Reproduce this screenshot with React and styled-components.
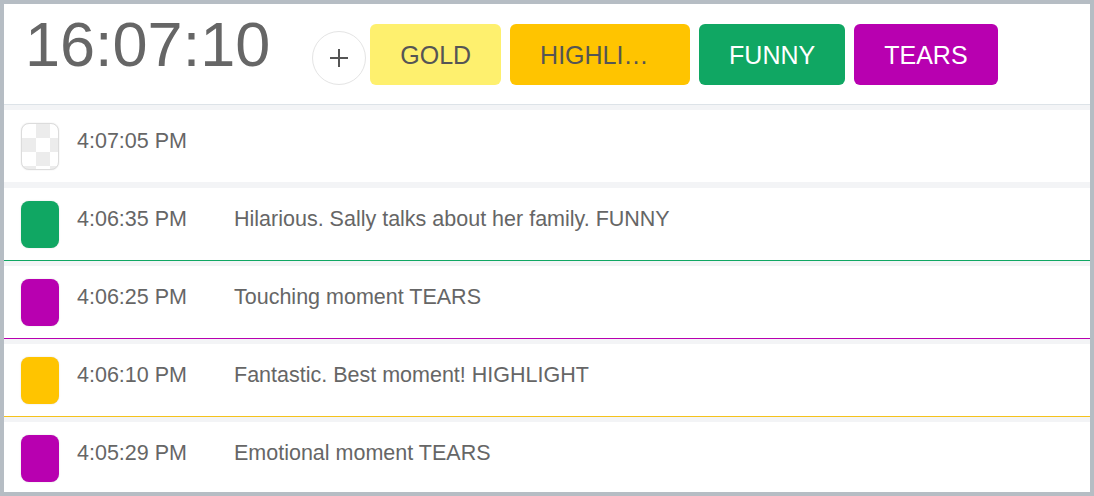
import React from "react";
import styled, { createGlobalStyle } from "styled-components";

const GlobalStyle = createGlobalStyle`
  html, body { margin: 0; padding: 0; background: #ffffff; }
  * { box-sizing: border-box; }
`;

const TAGS = {
  GOLD: { bg: "#fef06e", fg: "#555555", line: "#fef06e" },
  HIGHLIGHT: { bg: "#ffc400", fg: "#555555", line: "#f5c21c" },
  FUNNY: { bg: "#10a763", fg: "#ffffff", line: "#10a763" },
  TEARS: { bg: "#b800b0", fg: "#ffffff", line: "#b800b0" },
};

const entries = [
  { time: "4:07:05 PM", text: "", tag: null },
  { time: "4:06:35 PM", text: "Hilarious. Sally talks about her family. FUNNY", tag: "FUNNY" },
  { time: "4:06:25 PM", text: "Touching moment TEARS", tag: "TEARS" },
  { time: "4:06:10 PM", text: "Fantastic. Best moment! HIGHLIGHT", tag: "HIGHLIGHT" },
  { time: "4:05:29 PM", text: "Emotional moment TEARS", tag: "TEARS" },
];

const Frame = styled.div`
  width: 1094px;
  height: 496px;
  border: 4px solid #b6bdc4;
  background: #f3f4f6;
  overflow: hidden;
  font-family: "Liberation Sans", Arial, Helvetica, sans-serif;
  color: #666666;
`;

const Header = styled.header`
  display: flex;
  align-items: flex-start;
  height: 101px;
  padding-left: 21px;
  background: #ffffff;
  border-bottom: 1px solid #dde3e8;
`;

const Clock = styled.div`
  margin-top: 9px;
  font-size: 63px;
  line-height: 63px;
  color: #666666;
`;

const AddButton = styled.button`
  display: flex;
  align-items: center;
  justify-content: center;
  width: 54px;
  height: 54px;
  margin: 27px 0 0 42px;
  padding: 0;
  border: 1px solid #e4e4e4;
  border-radius: 50%;
  background: #ffffff;
  color: #555555;
`;

const TagBar = styled.div`
  display: flex;
  gap: 9px;
  margin: 20px 0 0 4px;
`;

const TagButton = styled.button`
  height: 61px;
  max-width: 180px;
  padding: 2px 30px 0;
  border: none;
  border-radius: 6px;
  background: ${(p) => p.$bg};
  color: ${(p) => p.$fg};
  font-family: inherit;
  font-size: 25px;
  white-space: nowrap;
  overflow: hidden;
  text-overflow: ellipsis;
`;

const List = styled.div`
  display: flex;
  flex-direction: column;
  gap: 5px;
  padding-top: 5px;
`;

const Row = styled.div`
  display: flex;
  align-items: center;
  height: 73px;
  padding-left: 17px;
  background: #ffffff;
  border-bottom: 1px solid ${(p) => p.$line || "#f3f4f6"};
`;

const Swatch = styled.div`
  flex: 0 0 auto;
  width: 38px;
  height: 47px;
  border-radius: 8px;
  background: ${(p) => p.$color};
  box-shadow: 0 0 1.5px rgba(0, 0, 0, 0.18);
`;

const EmptySwatch = styled.div`
  flex: 0 0 auto;
  width: 38px;
  height: 47px;
  border-radius: 8px;
  border: 1px solid #dcdcdc;
  background-color: #ffffff;
  background-image: conic-gradient(
    #ececec 0 25%,
    #ffffff 0 50%,
    #ececec 0 75%,
    #ffffff 0
  );
  background-size: 28px 28px;
  background-position: 0 0;
  box-shadow: 0 0 1.5px rgba(0, 0, 0, 0.12);
`;

const Time = styled.div`
  flex: 0 0 157px;
  margin-left: 18px;
  padding-bottom: 10px;
  font-size: 21.5px;
  color: #666666;
  white-space: nowrap;
`;

const Message = styled.div`
  padding-bottom: 10px;
  font-size: 21.5px;
  color: #666666;
  white-space: nowrap;
`;

function PlusIcon() {
  return (
    <svg width="20" height="20" viewBox="0 0 20 20">
      <path d="M10 1v18M1 10h18" stroke="#555555" strokeWidth="2" fill="none" />
    </svg>
  );
}

export default function App() {
  return (
    <>
      <GlobalStyle />
      <Frame>
        <Header>
          <Clock>16:07:10</Clock>
          <AddButton aria-label="Add tag">
            <PlusIcon />
          </AddButton>
          <TagBar>
            {Object.entries(TAGS).map(([name, t]) => (
              <TagButton key={name} $bg={t.bg} $fg={t.fg}>
                {name}
              </TagButton>
            ))}
          </TagBar>
        </Header>
        <List>
          {entries.map((e, i) => {
            const t = e.tag ? TAGS[e.tag] : null;
            return (
              <Row key={i} $line={t ? t.line : null}>
                {t ? <Swatch $color={t.bg} /> : <EmptySwatch />}
                <Time>{e.time}</Time>
                <Message>{e.text}</Message>
              </Row>
            );
          })}
        </List>
      </Frame>
    </>
  );
}
